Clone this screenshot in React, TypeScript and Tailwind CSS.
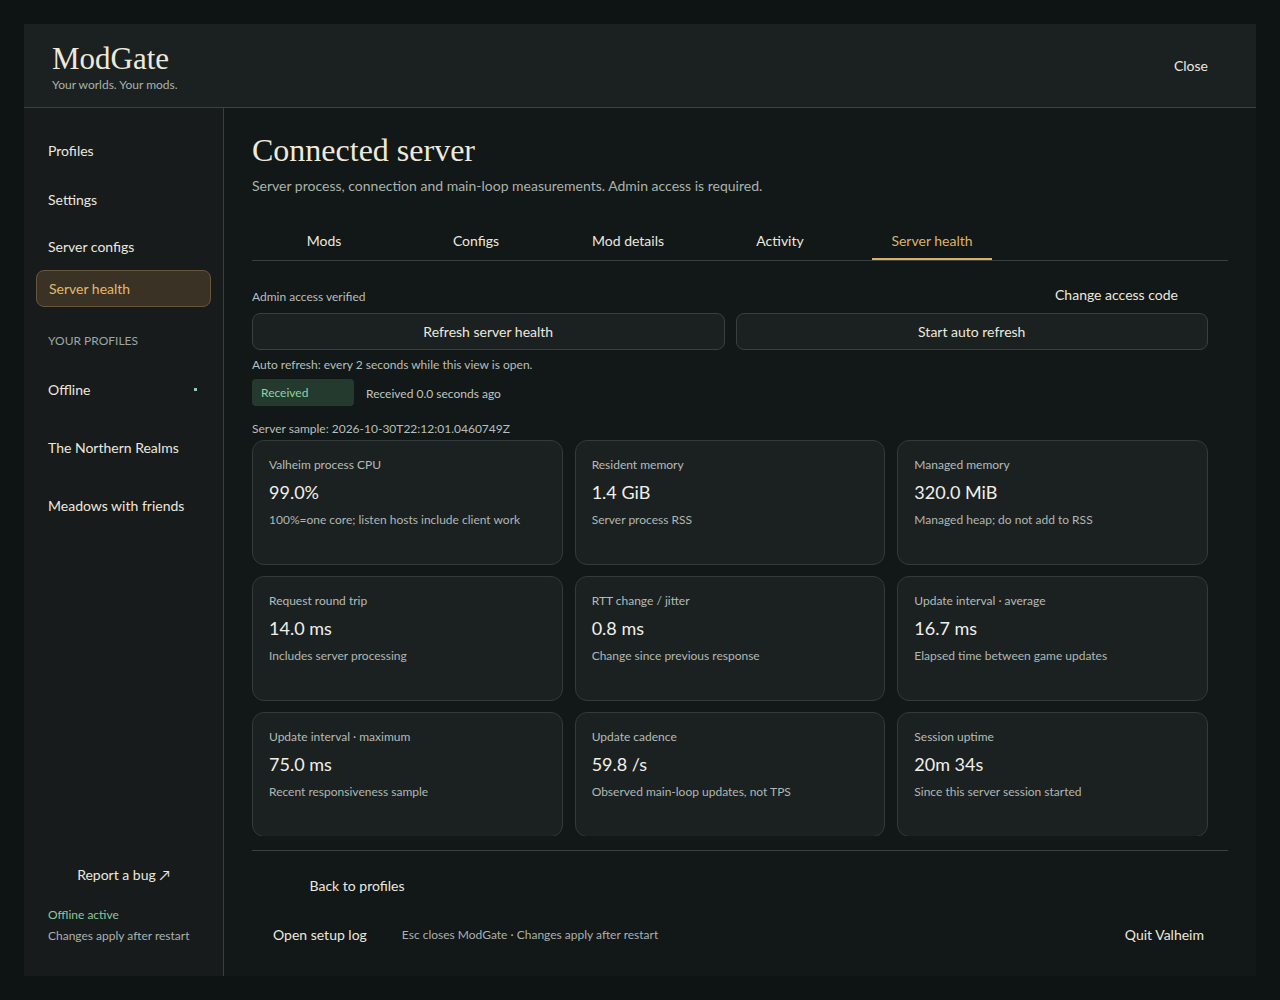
import React from "react";

const sans = { fontFamily: "Lato, 'Noto Sans', sans-serif" };
const serif = { fontFamily: "'Liberation Serif', Georgia, serif" };

const cards = [
  ["Valheim process CPU", "99.0%", "100%=one core; listen hosts include client work"],
  ["Resident memory", "1.4 GiB", "Server process RSS"],
  ["Managed memory", "320.0 MiB", "Managed heap; do not add to RSS"],
  ["Request round trip", "14.0 ms", "Includes server processing"],
  ["RTT change / jitter", "0.8 ms", "Change since previous response"],
  ["Update interval · average", "16.7 ms", "Elapsed time between game updates"],
  ["Update interval · maximum", "75.0 ms", "Recent responsiveness sample"],
  ["Update cadence", "59.8 /s", "Observed main-loop updates, not TPS"],
  ["Session uptime", "20m 34s", "Since this server session started"],
];

const tabs = ["Mods", "Configs", "Mod details", "Activity", "Server health"];

export default function App() {
  return (
    <div className="w-[1280px] h-[1000px] bg-[#0e1414] p-6 text-[#ece8df]" style={sans}>
      <div className="w-full h-full flex flex-col bg-[#1b2121]">
        {/* Header */}
        <div className="h-[84px] shrink-0 flex items-center justify-between border-b border-[#3a4040] pl-7 pr-8">
          <div className="flex flex-col pt-[4px]">
            <div className="text-[31px] leading-[34px] text-[#efe9dc]" style={serif}>ModGate</div>
            <div className="text-[12px] leading-[16px] text-[#aab1ab] mt-[1px]">Your worlds. Your mods.</div>
          </div>
          <button className="text-[14px] px-4 py-2 text-[#ece8df]">Close</button>
        </div>
        <div className="flex flex-1 min-h-0">
          {/* Sidebar */}
          <div className="w-[200px] shrink-0 bg-[#171b1c] border-r border-[#3a4040] flex flex-col pt-6 pb-8">
            <div className="mx-3 h-[37px] px-3 flex items-center text-[14px]">Profiles</div>
            <div className="mx-3 mt-3 h-[37px] px-3 flex items-center text-[14px]">Settings</div>
            <div className="mx-3 mt-[10px] h-[37px] px-3 flex items-center text-[14px]">Server configs</div>
            <div className="mx-3 mt-[5px] h-[37px] px-3 flex items-center text-[14px] rounded-lg bg-[#3a3224] border border-[#66573a] text-[#e2b96f]">Server health</div>
            <div className="mx-3 mt-[26px] px-3 text-[12px] leading-[16px] text-[#9aa7a6]">YOUR PROFILES</div>
            <div className="mx-3 mt-[11px] h-[58px] px-3 flex items-center justify-between text-[14px]">
              <span>Offline</span>
              <span className="w-[3px] h-[3px] bg-[#93c9ad] mr-[2px]"></span>
            </div>
            <div className="mx-3 h-[58px] px-3 flex items-center text-[14px]">The Northern Realms</div>
            <div className="mx-3 h-[58px] px-3 flex items-center text-[14px]">Meadows with friends</div>
            <div className="flex-1"></div>
            <div className="text-center text-[14px] leading-[20px]">Report a bug ↗</div>
            <div className="mt-[22px] px-6 text-[12px] leading-[16px] text-[#8cc79a]">Offline active</div>
            <div className="mt-[5px] px-6 text-[12px] leading-[16px] text-[#aab1ae]">Changes apply after restart</div>
          </div>
          {/* Main */}
          <div className="flex-1 min-w-0 bg-[#121717] flex flex-col px-7 pt-6">
            <div className="text-[32px] leading-[36px] text-[#efe9dc]" style={serif}>Connected server</div>
            <div className="mt-2 text-[14px] leading-[20px] text-[#aab3ae]">Server process, connection and main-loop measurements. Admin access is required.</div>
            <div className="mt-[25px] flex gap-2 border-b border-[#3a4040]">
              {tabs.map((t) => (
                <div key={t} className="w-[144px] flex justify-center">
                  <div
                    className={
                      t === "Server health"
                        ? "w-[120px] h-[39px] flex items-center justify-center text-[14px] text-[#dcb36c] border-b-2 border-[#d9b06a] mb-[-1px] pt-[1px]"
                        : "w-[120px] h-[39px] flex items-center justify-center text-[14px] text-[#ece8df]"
                    }
                  >
                    {t}
                  </div>
                </div>
              ))}
            </div>
            {/* Scroll area */}
            <div className="flex-1 min-h-0 overflow-hidden pr-5">
              <div className="pt-[24px] flex items-end justify-between">
                <span className="text-[12px] leading-[16px] text-[#b8bfba]">Admin access verified</span>
                <span className="text-[14px] leading-[20px] pr-[30px]">Change access code</span>
              </div>
              <div className="mt-[8px] grid grid-cols-2 gap-[11px]">
                <button className="h-[37px] rounded-lg bg-[#1b2121] border border-[#3a4040] text-[14px] text-[#ece8df]">Refresh server health</button>
                <button className="h-[37px] rounded-lg bg-[#1b2121] border border-[#3a4040] text-[14px] text-[#ece8df]">Start auto refresh</button>
              </div>
              <div className="mt-[7px] text-[12px] leading-[16px] text-[#b8bfba]">Auto refresh: every 2 seconds while this view is open.</div>
              <div className="mt-[6px] flex items-center gap-3">
                <span className="w-[102px] h-[27px] rounded bg-[#243a2e] text-[#8fd3a2] text-[12px] flex items-center pl-[9px] pt-[1px]">Received</span>
                <span className="text-[12px] text-[#c0c6c0] pt-[2px]">Received 0.0 seconds ago</span>
              </div>
              <div className="mt-[15px] text-[12px] leading-[16px] text-[#b8bfba]">Server sample: 2026-10-30T22:12:01.0460749Z</div>
              <div className="mt-[3px] grid grid-cols-3 gap-x-3 gap-y-[11px]">
                {cards.map(([l, v, d]) => (
                  <div key={l} className="h-[125px] rounded-xl bg-[#1b2121] border border-[#333a3a] px-4 pt-[16px]">
                    <div className="text-[12px] leading-[16px] text-[#b5bcb8]">{l}</div>
                    <div className="mt-[7px] text-[18px] leading-[24px] text-[#f1efe9]">{v}</div>
                    <div className="mt-2 text-[12px] leading-[16px] text-[#b0b7b3]">{d}</div>
                  </div>
                ))}
              </div>
            </div>
            {/* Footer */}
            <div className="mt-[14px] border-t border-[#3a4040] pt-[16px] pb-[24px]">
              <button className="w-[210px] h-[36px] text-[14px] text-[#ece8df]">Back to profiles</button>
              <div className="mt-[13px] flex items-center">
                <button className="h-[36px] px-[21px] text-[14px] text-[#ece8df]">Open setup log</button>
                <span className="ml-[14px] text-[12px] text-[#aab1ae] pt-[1px]">Esc closes ModGate · Changes apply after restart</span>
                <div className="flex-1"></div>
                <button className="h-[36px] px-6 text-[14px] text-[#ece8df]">Quit Valheim</button>
              </div>
            </div>
          </div>
        </div>
      </div>
    </div>
  );
}
